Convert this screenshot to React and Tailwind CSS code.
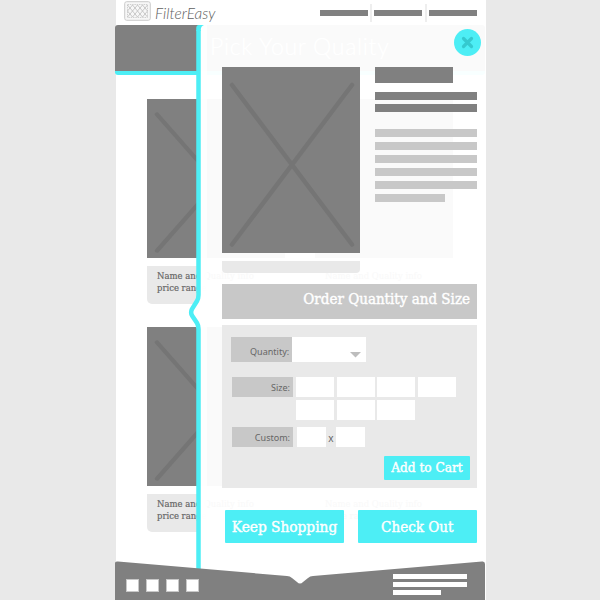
import React from "react";

const slab = "font-['DejaVu_Serif_Condensed','DejaVu_Serif',serif]";

function CrossedImage({ className }) {
  return (
    <div className={`bg-[#808080] ${className}`}>
      <svg className="block h-full w-full" viewBox="0 0 138 186" preserveAspectRatio="none">
        <path d="M10 18L130 177.500M130 18L10 177.500" stroke="#757575" strokeWidth="4.500" strokeLinecap="round" />
      </svg>
    </div>
  );
}

function Card() {
  return (
    <div className="w-[138px]">
      <CrossedImage className="h-[159px]" />
      <div className={`mt-2 h-[38px] overflow-hidden rounded-b-[5px] bg-[#e9e9e9] pl-[10px] pt-1 text-[9.5px] leading-3 text-[#666] [-webkit-text-stroke:0.2px_#666] ${slab}`}>
        <div className="w-max origin-left scale-x-[0.99] whitespace-nowrap">
          Name and Quality info
          <br />
          price range
        </div>
      </div>
    </div>
  );
}

function Label({ children, className }) {
  return (
    <div className={`flex items-center justify-end bg-[#c8c8c8] pr-[3px] font-['Noto_Sans',sans-serif] text-[9.5px] text-[#666] ${className}`}>
      <span className="origin-right scale-x-[0.95] pt-[3px]">{children}</span>
    </div>
  );
}

function Button({ children, className, textClass }) {
  return (
    <button className={`flex items-center justify-center rounded-[1px] bg-[#4deef5] text-white [-webkit-text-stroke:0.4px_white] ${slab} ${className}`}>
      <span className={`whitespace-nowrap ${textClass}`}>{children}</span>
    </button>
  );
}

function Header() {
  return (
    <header className="flex h-[25px] items-start">
      <svg className="ml-2 mt-px h-5 w-7 shrink-0" viewBox="0 0 28 20" fill="none">
        <rect x="0.7" y="0.7" width="25.6" height="18.6" rx="2" fill="#f7f7f7" stroke="#cbcbcb" />
        <path d="M3.500 3.500H23.500V16.500H3.500Z" stroke="#d0d0d0" strokeDasharray="1.500 0.800" />
        <path d="M3.500 4L13.500 16L23.500 4M3.500 16L13.500 4L23.500 16M8.500 4L3.500 10L8.500 16L18.500 4L23.500 10L18.500 16Z" stroke="#bdbdbd" strokeWidth="0.8" />
      </svg>
      <span className="ml-[3px] mt-[2px] w-[62px] origin-left scale-x-[0.96] whitespace-nowrap font-['Lato',sans-serif] text-[16px] font-light italic leading-[22px] text-[#606060]">FilterEasy</span>
      <nav className="ml-auto mr-[9px] mt-1 flex h-[18px]">
        <div className="mt-[6px] h-[6px] w-12 bg-[#808080]" />
        <div className="ml-[2px] w-[2px] bg-[#eee]" />
        <div className="ml-[2px] mt-[6px] h-[6px] w-12 bg-[#808080]" />
        <div className="ml-[3px] w-[2px] bg-[#eee]" />
        <div className="ml-[2px] mt-[6px] h-[6px] w-12 bg-[#808080]" />
      </nav>
    </header>
  );
}

function OrderForm() {
  return (
    <section className="mt-[6px] flex h-[163px] flex-col bg-[#e9e9e9] pl-[9px] pr-[7px] pt-3">
      <div className="flex h-[25px]">
        <Label className="w-[61px] pt-[2px]">Quantity:</Label>
        <div className="flex w-[74px] items-end justify-end bg-white pb-1 pr-[5px]">
          <svg width="11" height="7" viewBox="0 0 11 7">
            <path d="M0 1H11L5.500 6.500Z" fill="#bdbdbd" />
          </svg>
        </div>
      </div>
      <div className="ml-px mt-[15px] flex gap-[3px]">
        <Label className="h-5 w-[61px]">Size:</Label>
        <div className="grid grid-cols-[repeat(4,38px)] gap-x-[2.7px] gap-y-[3px]">
          {[1, 2, 3, 4, 5, 6, 7].map((n) => (
            <div key={n} className="h-5 bg-white" />
          ))}
        </div>
      </div>
      <div className="ml-px mt-[6.5px] flex h-5">
        <Label className="w-[61px]">Custom:</Label>
        <div className="ml-[4px] w-[29px] bg-white" />
        <span className="w-[10px] text-center font-['Noto_Sans',sans-serif] text-[10px] leading-[22px] text-[#666]">x</span>
        <div className="w-[29px] bg-white" />
      </div>
      <Button className="ml-auto mt-[9.5px] h-6 w-[86px]" textClass="text-[13.5px] pb-px">Add to Cart</Button>
    </section>
  );
}

function Drawer() {
  return (
    <aside className="absolute left-20 top-6 h-[576px] w-[290px]">
      <svg className="absolute -left-2 top-0 h-[576px] w-[298px]" viewBox="0 0 298 576" fill="none">
        <path d="M13 1H298V576H11V302Q11 300 9 298L4 291Q3 289 4 287L9 280Q11 277 11 274V4Q11 1 14 1Z" fill="#fff" fillOpacity="0.96" />
        <path d="M13 1H19V576H13Z" fill="#fff" fillOpacity="0.8" />
        <path d="M10.500 6V271Q10.500 274.500 9 277L4 285Q2.300 288.500 4 291.500L9 299Q10.500 301.500 10.500 305V576" stroke="#4deef5" strokeWidth="4.500" />
        <path d="M8.250 7V4Q8.250 1 11 1H16Q12.750 2 12.750 6V7Z" fill="#4deef5" />
      </svg>
      <div className="relative pl-[26px] pr-[9px]">
        <button aria-label="Close" className="absolute right-[5.5px] top-[5px] flex size-[27px] items-center justify-center rounded-full bg-[#4deef5]">
          <svg width="13" height="13" viewBox="0 0 13 13">
            <path d="M2.500 2.500L10.500 10.500M10.500 2.500L2.500 10.500" stroke="#35c9cf" strokeWidth="3.200" strokeLinecap="round" />
          </svg>
        </button>
        <div className="flex justify-between pt-[43px]">
          <div>
            <CrossedImage className="h-[186px] w-[138px]" />
            <div className="mt-2 h-3 rounded-b-[4px] bg-[#e9e9e9]" />
          </div>
          <div className="w-[102.5px]">
            <div className="h-4 w-[78.5px] bg-[#808080]" />
            <div className="mt-[8.5px] h-2 bg-[#808080]" />
            <div className="mt-[4.5px] h-2 bg-[#808080]" />
            <div className="mt-[17px] flex flex-col gap-[5px]">
              {[1, 2, 3, 4, 5].map((n) => (
                <div key={n} className="h-2 bg-[#c8c8c8]" />
              ))}
              <div className="h-2 w-[70.5px] bg-[#c8c8c8]" />
            </div>
          </div>
        </div>
        <h2 className={`mt-[11px] flex h-[35px] justify-end bg-[#c8c8c8] pr-[7px] text-[15px] leading-[31px] text-white [-webkit-text-stroke:0.4px_white] ${slab}`}>
          <span className="whitespace-nowrap">Order Quantity and Size</span>
        </h2>
        <OrderForm />
        <div className="ml-[3px] mt-[22px] flex justify-between">
          <Button className="h-[33px] w-[119px]" textClass="pt-0.5 text-[15.5px] scale-x-[0.985]">Keep Shopping</Button>
          <Button className="h-[33px] w-[119px]" textClass="pt-0.5 text-[15.5px] scale-x-[0.97]">Check Out</Button>
        </div>
      </div>
    </aside>
  );
}

function Footer() {
  return (
    <footer className="absolute bottom-0 -left-px h-[39px] w-[371px]">
      <svg className="absolute inset-0" width="371" height="39" viewBox="0 0 371 39">
        <path d="M0 2Q0 0 3 0.500L172 15Q175 15 177 17L182 21Q185 24 188 21L193 17Q195 15 198 15L367 0.500Q370 0 370 3V39H0Z" fill="#808080" />
      </svg>
      <div className="relative flex justify-between pl-[10.5px] pr-[19px] pt-[13px]">
        <div className="flex gap-[7px] pt-[5px]">
          {[1, 2, 3, 4].map((n) => (
            <div key={n} className="size-[13px] border border-[#c8c8c8] bg-white" />
          ))}
        </div>
        <div className="flex w-[74px] flex-col gap-[3px]">
          <div className="h-[5px] bg-white" />
          <div className="h-[5px] bg-white" />
          <div className="h-[5px] w-12 bg-white" />
        </div>
      </div>
    </footer>
  );
}

export default function App() {
  return (
    <div className="h-[600px] w-[600px] overflow-hidden bg-[#e9e9e9]">
      <main className="relative ml-[116px] h-[600px] w-[370px] bg-white">
        <Header />
        <div className="-ml-px h-[50px] w-[370px] rounded-[3px] border-b-4 border-[#4deef5] bg-[#808080] pl-[95px]">
          <h1 className="whitespace-nowrap font-['Lato',sans-serif] text-[23px] font-light leading-[43px] tracking-[0.7px] text-white">Pick Your Quality</h1>
        </div>
        <div className="ml-[31px] mt-6 grid w-max grid-cols-2 gap-x-[30px] gap-y-[23px]">
          <Card />
          <Card />
          <Card />
          <Card />
        </div>
        <Drawer />
        <Footer />
      </main>
    </div>
  );
}
